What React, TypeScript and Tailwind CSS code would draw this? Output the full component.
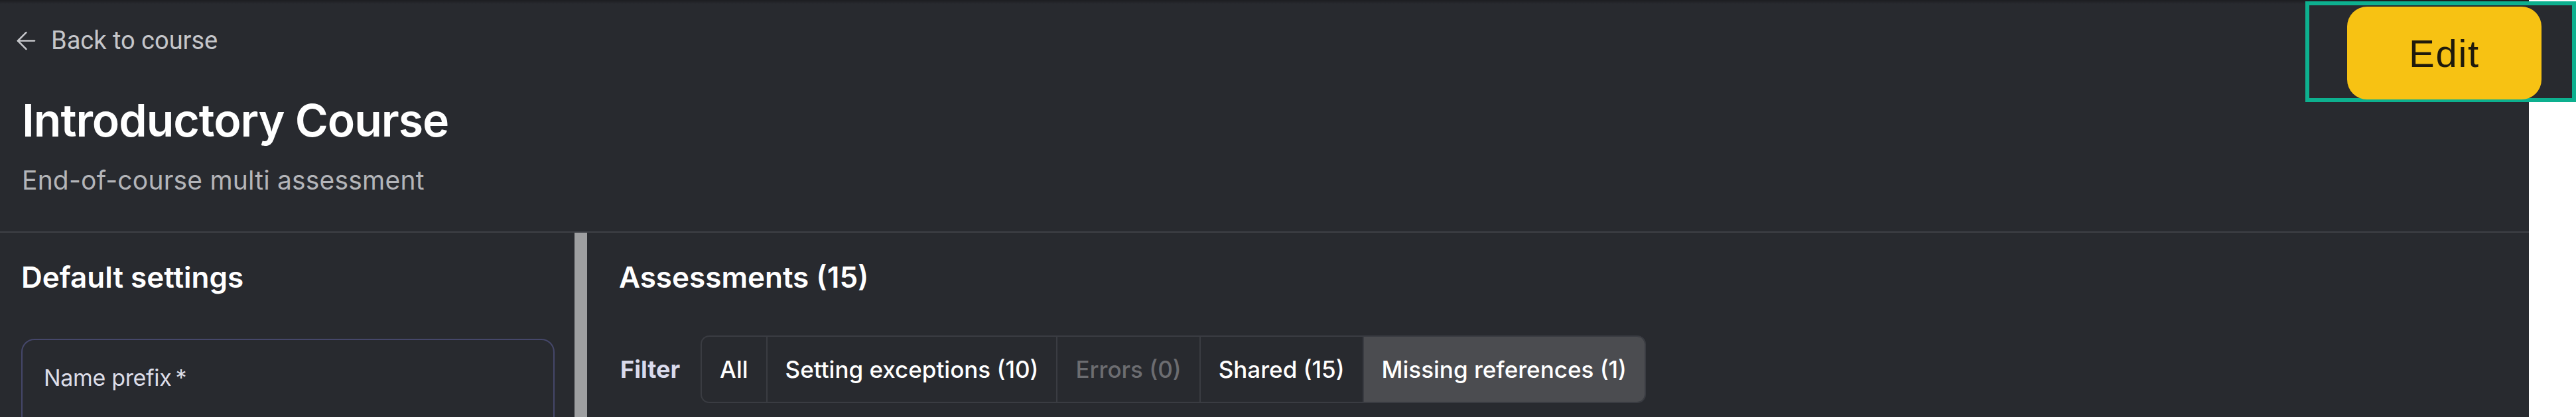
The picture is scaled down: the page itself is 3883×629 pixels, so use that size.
import React from "react";

const inter = { fontFamily: '"Inter", "Liberation Sans", sans-serif' };

function ArrowLeft() {
  return (
    <svg width="43" height="43" viewBox="0 0 24 24" fill="none" stroke="#c5c6ca" strokeWidth="1.4" strokeLinecap="round" strokeLinejoin="round" className="-ml-[9px] -mr-[9px]">
      <path d="m12 19-7-7 7-7" />
      <path d="M19 12H5" />
    </svg>
  );
}

const segments = [
  { label: "All", muted: false, active: false },
  { label: "Setting exceptions (10)", muted: false, active: false },
  { label: "Errors (0)", muted: true, active: false },
  { label: "Shared (15)", muted: false, active: false },
  { label: "Missing references (1)", muted: false, active: true },
];

export default function App() {
  return (
    <div className="relative flex w-[3883px] h-[629px] overflow-hidden bg-white">
      <div className="relative flex flex-col w-[3812px] h-full bg-[#282a2f]" style={inter}>
        <div className="absolute inset-x-0 top-0 h-[6px] bg-gradient-to-b from-[#1c1d21] to-[#282a2f]" />
        {/* header */}
        <div className="flex flex-col px-[33px]">
          <div className="flex items-center gap-[25px] pt-[36px] h-[86px]">
            <div className="flex items-center -ml-[6px]">
              <ArrowLeft />
            </div>
            <span className="text-[38px] leading-[50px] text-[#c5c6ca]" style={{ fontFamily: '"Roboto", sans-serif' }}>
              Back to course
            </span>
          </div>
          <h1 className="mt-[53px] text-[68px] leading-[84px] font-semibold text-white tracking-[-0.015em]">
            Introductory Course
          </h1>
          <p className="mt-[24px] text-[39px] leading-[50px] text-[#b4b5b9] tracking-[0.005em]">
            End-of-course multi assessment
          </p>
        </div>
        <div className="mt-[52px] h-[2px] bg-[#3e4046]" />
        {/* body */}
        <div className="flex flex-1 min-h-0">
          <div className="w-[866px] pl-[32px] pr-[30px] pt-[37px]">
            <h2 className="text-[44px] leading-[60px] font-semibold text-white">Default settings</h2>
            <div className="mt-[63px] h-[200px] rounded-[20px] border-2 border-[#45476a] px-[32px] pt-[32px]">
              <span className="text-[34px] leading-[50px] text-[#dcdde8] tracking-[-0.01em]">
                Name prefix<span className="ml-[6px]">*</span>
              </span>
            </div>
          </div>
          <div className="w-[19px] bg-[#9e9fa1]" />
          <div className="flex-1 pl-[48px] pt-[37px]">
            <h2 className="text-[44px] leading-[60px] font-semibold text-white">Assessments (15)</h2>
            <div className="mt-[58px] flex items-center gap-[31px]">
              <span className="text-[36px] leading-[50px] font-bold text-[#d9daec] ml-[2px]">Filter</span>
              <div className="flex h-[102px] rounded-[13px] border-2 border-[#3a3c42] overflow-hidden">
                {segments.map((s, i) => (
                  <div
                    key={s.label}
                    className={
                      "flex items-center px-[27px] text-[35px] leading-[50px] font-medium " +
                      (i > 0 ? "border-l-2 border-[#3a3c42] " : "") +
                      (s.active ? "bg-[#4b4c50] " : "") +
                      (s.muted ? "text-[#6c6d71]" : "text-white")
                    }
                  >
                    {s.label}
                  </div>
                ))}
              </div>
            </div>
          </div>
        </div>
      </div>
      {/* highlighted edit action overlay */}
      <div className="absolute left-[3475px] top-[2px] w-[408px] h-[152px] border-[6px] border-[#0db08f] bg-[#282a2f] pl-[57px] pt-[2px]">
        <button
          className="flex items-center justify-center w-[293px] h-[140px] rounded-[30px] bg-[#f7c213] text-[58px] tracking-[0.03em] text-[#1f1a0c]"
          style={{ fontFamily: '"Liberation Sans", Arial, sans-serif' }}
        >
          Edit
        </button>
      </div>
    </div>
  );
}
